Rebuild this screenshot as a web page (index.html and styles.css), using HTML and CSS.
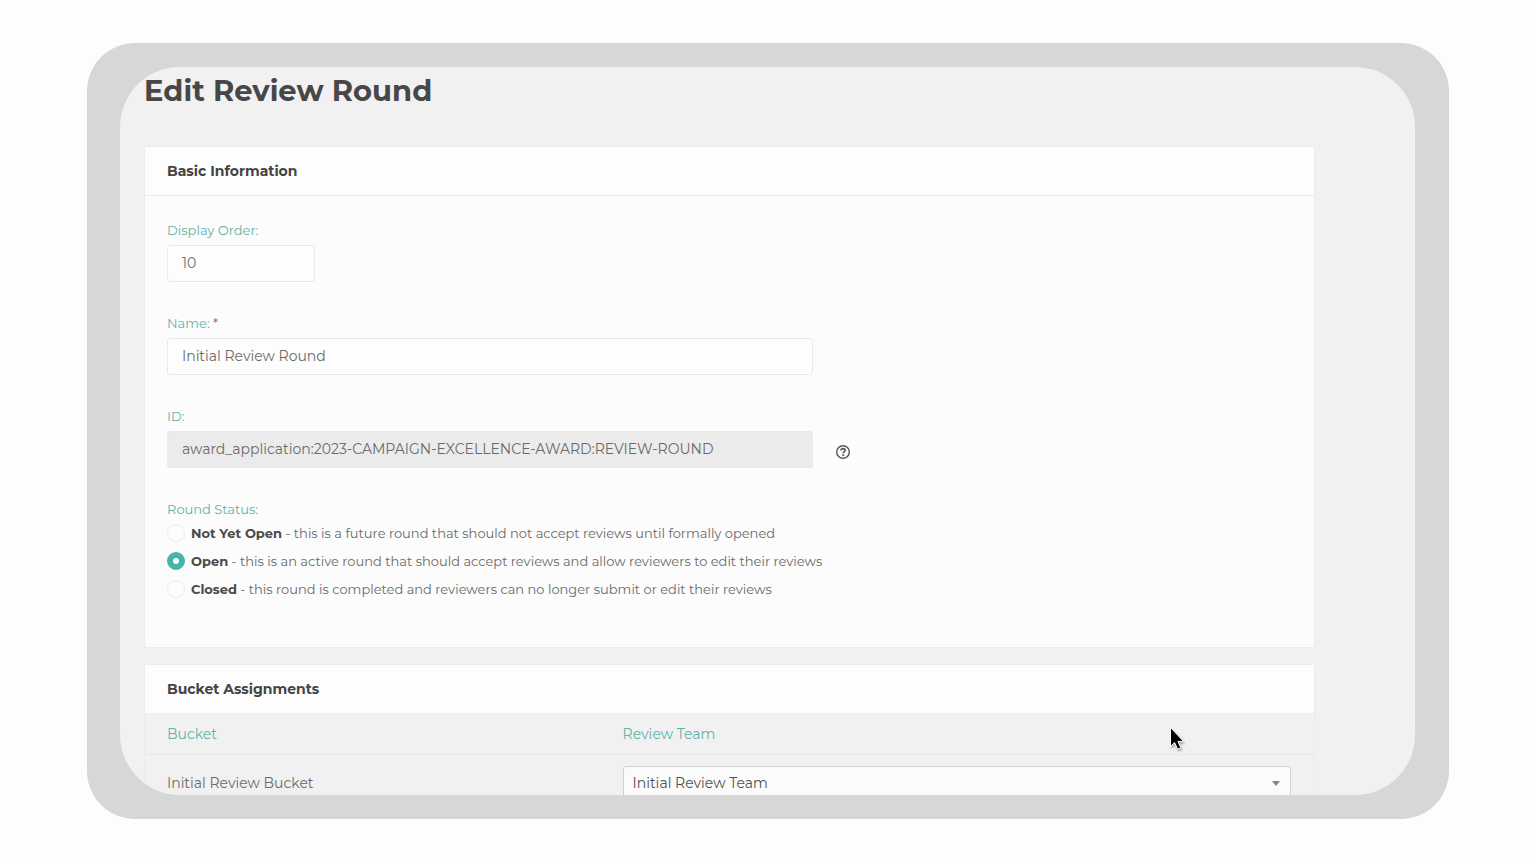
FILE: index.html
```html
<!DOCTYPE html>
<html lang="en">
<head>
    <meta charset="UTF-8">
    <meta name="viewport" content="width=device-width, initial-scale=1.0">
    <title>Edit Review Round</title>
    <link rel="stylesheet" href="styles.css">
</head>
<body>
    <div class="frame">
        <main class="screen">
            <h1>Edit Review Round</h1>

            <section class="card">
                <h2>Basic Information</h2>
                <form class="card-body">
                    <div class="field">
                        <label for="order">Display Order:</label>
                        <input type="text" id="order" class="short" value="10">
                    </div>
                    <div class="field">
                        <label for="name">Name: <span class="required">*</span></label>
                        <input type="text" id="name" value="Initial Review Round">
                    </div>
                    <div class="field">
                        <label for="round-id">ID:</label>
                        <div class="with-help">
                            <input type="text" id="round-id" value="award_application:2023-CAMPAIGN-EXCELLENCE-AWARD:REVIEW-ROUND" readonly>
                            <button type="button" class="help" aria-label="Help">
                                <svg viewBox="0 0 16 16" width="16" height="16" fill="none" stroke="currentColor">
                                    <circle cx="8" cy="8" r="6.3" stroke-width="1.4"/>
                                    <path d="M6 6.5C6.1 5.2 7 4.6 8.1 4.6c1.2 0 2 .7 2 1.7 0 1.5-1.9 1.5-1.900 3" stroke-width="1.7"/>
                                    <path d="M7.300 11.100h1.800" stroke-width="1.700"/>
                                </svg>
                            </button>
                        </div>
                    </div>
                    <fieldset class="status">
                        <legend>Round Status:</legend>
                        <label class="option">
                            <input type="radio" name="status">
                            <span><b>Not Yet Open</b> - this is a future round that should not accept reviews until formally opened</span>
                        </label>
                        <label class="option">
                            <input type="radio" name="status" checked>
                            <span><b>Open</b> - this is an active round that should accept reviews and allow reviewers to edit their reviews</span>
                        </label>
                        <label class="option">
                            <input type="radio" name="status">
                            <span><b>Closed</b> - this round is completed and reviewers can no longer submit or edit their reviews</span>
                        </label>
                    </fieldset>
                </form>
            </section>

            <section class="card buckets">
                <h2>Bucket Assignments</h2>
                <table>
                    <thead>
                        <tr>
                            <th>Bucket</th>
                            <th>Review Team</th>
                        </tr>
                    </thead>
                    <tbody>
                        <tr>
                            <td><label for="team">Initial Review Bucket</label></td>
                            <td>
                                <div class="select-wrap">
                                    <select id="team">
                                        <option>Initial Review Team</option>
                                    </select>
                                </div>
                            </td>
                        </tr>
                    </tbody>
                </table>
            </section>

            <!-- mouse pointer -->
            <svg class="pointer" viewBox="0 0 18 26" width="18" height="26" aria-hidden="true">
                <path d="M1.5 1.5V20.500L5.600 16.600L8.600 23.200L11.800 21.800L9 15.400H14.600Z" fill="#000" stroke="#fff" stroke-width="1"/>
            </svg>
        </main>
    </div>
</body>
</html>
```
FILE: styles.css
```css
*{
    box-sizing: border-box;
}
body{
    margin: 0;
    height: 100vh;
    padding: 43px 87px 45px;
    background: #fdfdfd;
    font-family: Montserrat, Inter, sans-serif;
    font-size: 13px;
    line-height: 18px;
    color: #6a6a6a;
}
.frame{
    height: 100%;
    padding: 24px 34px 24px 33px;
    background: #d7d7d7;
    border-radius: 48px;
}
.screen{
    position: relative;
    height: 100%;
    padding: 4px 100px 0 24px;
    background: #f1f1f1;
    border-radius: 60px;
    overflow: hidden;
}
h1{
    margin: 0 0 35px;
    font-size: 29px;
    line-height: 40px;
    font-weight: 700;
    color: #474747;
}
.card{
    margin-bottom: 16px;
    background: #fcfcfc;
    border: 1px solid #ececec;
    border-radius: 3px;
}
.card h2{
    margin: 0;
    padding: 15px 22px;
    font-size: 14px;
    line-height: 18px;
    font-weight: 700;
    color: #444;
    background: #fdfdfd;
    border-bottom: 1px solid #ebebeb;
}
.card-body{
    display: flex;
    flex-direction: column;
    gap: 32px;
    padding: 25px 22px 44px;
}
.field{
    display: flex;
    flex-direction: column;
    gap: 6px;
}
.field > label,
.status legend{
    color: #5eb3aa;
}
.required{
    color: #a05a55;
}
input[type="text"]{
    width: 100%;
    max-width: 646px;
    height: 37px;
    padding: 0 14px 2px;
    font: inherit;
    font-size: 14px;
    color: #6a6a6a;
    background: #fdfdfd;
    border: 1px solid #e9e9e9;
    border-radius: 3px;
}
input.short{
    width: 148px;
}
input[readonly]{
    background: #ebebeb;
}
.with-help{
    display: flex;
    align-items: center;
    gap: 22px;
}
.help{
    display: flex;
    padding: 5px 0 0;
    border: 0;
    background: none;
    color: #555;
}
.status{
    margin: 0;
    padding: 0;
    border: 0;
}
.status legend{
    padding: 0 0 1px;
}
.option{
    display: flex;
    align-items: center;
    gap: 6px;
    line-height: 28px;
}
.option b{
    color: #4a4a4a;
}
.option input{
    appearance: none;
    width: 18px;
    height: 18px;
    margin: 0;
    border: 1px solid #ececec;
    border-radius: 50%;
}
.option input:checked{
    border: 6px solid #45b5aa;
    background: #fff;
}

.buckets{
    background: none;
}
.buckets h2{
    border-bottom: 0;
}
table{
    width: 100%;
    table-layout: fixed;
    border-collapse: collapse;
    font-size: 14px;
}
th, td{
    padding: 11px 23px 11px 10px;
    text-align: left;
}
th{
    padding-top: 12px;
    font-weight: 400;
    color: #5eb3aa;
    border-bottom: 1px solid #e8e8e8;
}
th:first-child, td:first-child{
    width: 40%;
    padding-left: 22px;
}
.select-wrap{
    position: relative;
}
/* drop-down arrow */
.select-wrap::after{
    content: "";
    position: absolute;
    right: 11px;
    top: 15px;
    border: 4px solid transparent;
    border-top: 5px solid #858585;
    border-bottom: 0;
}
select{
    display: block;
    appearance: none;
    width: 100%;
    height: 34px;
    padding: 0 9px;
    font: inherit;
    color: #505050;
    background: #fbfbfb;
    border: 1px solid #d0d0d0;
    border-radius: 3px;
}
.pointer{
    position: absolute;
    right: 228px;
    bottom: 43px;
    filter: drop-shadow(1px 2px 1px rgba(0, 0, 0, 0.3));
}
```
